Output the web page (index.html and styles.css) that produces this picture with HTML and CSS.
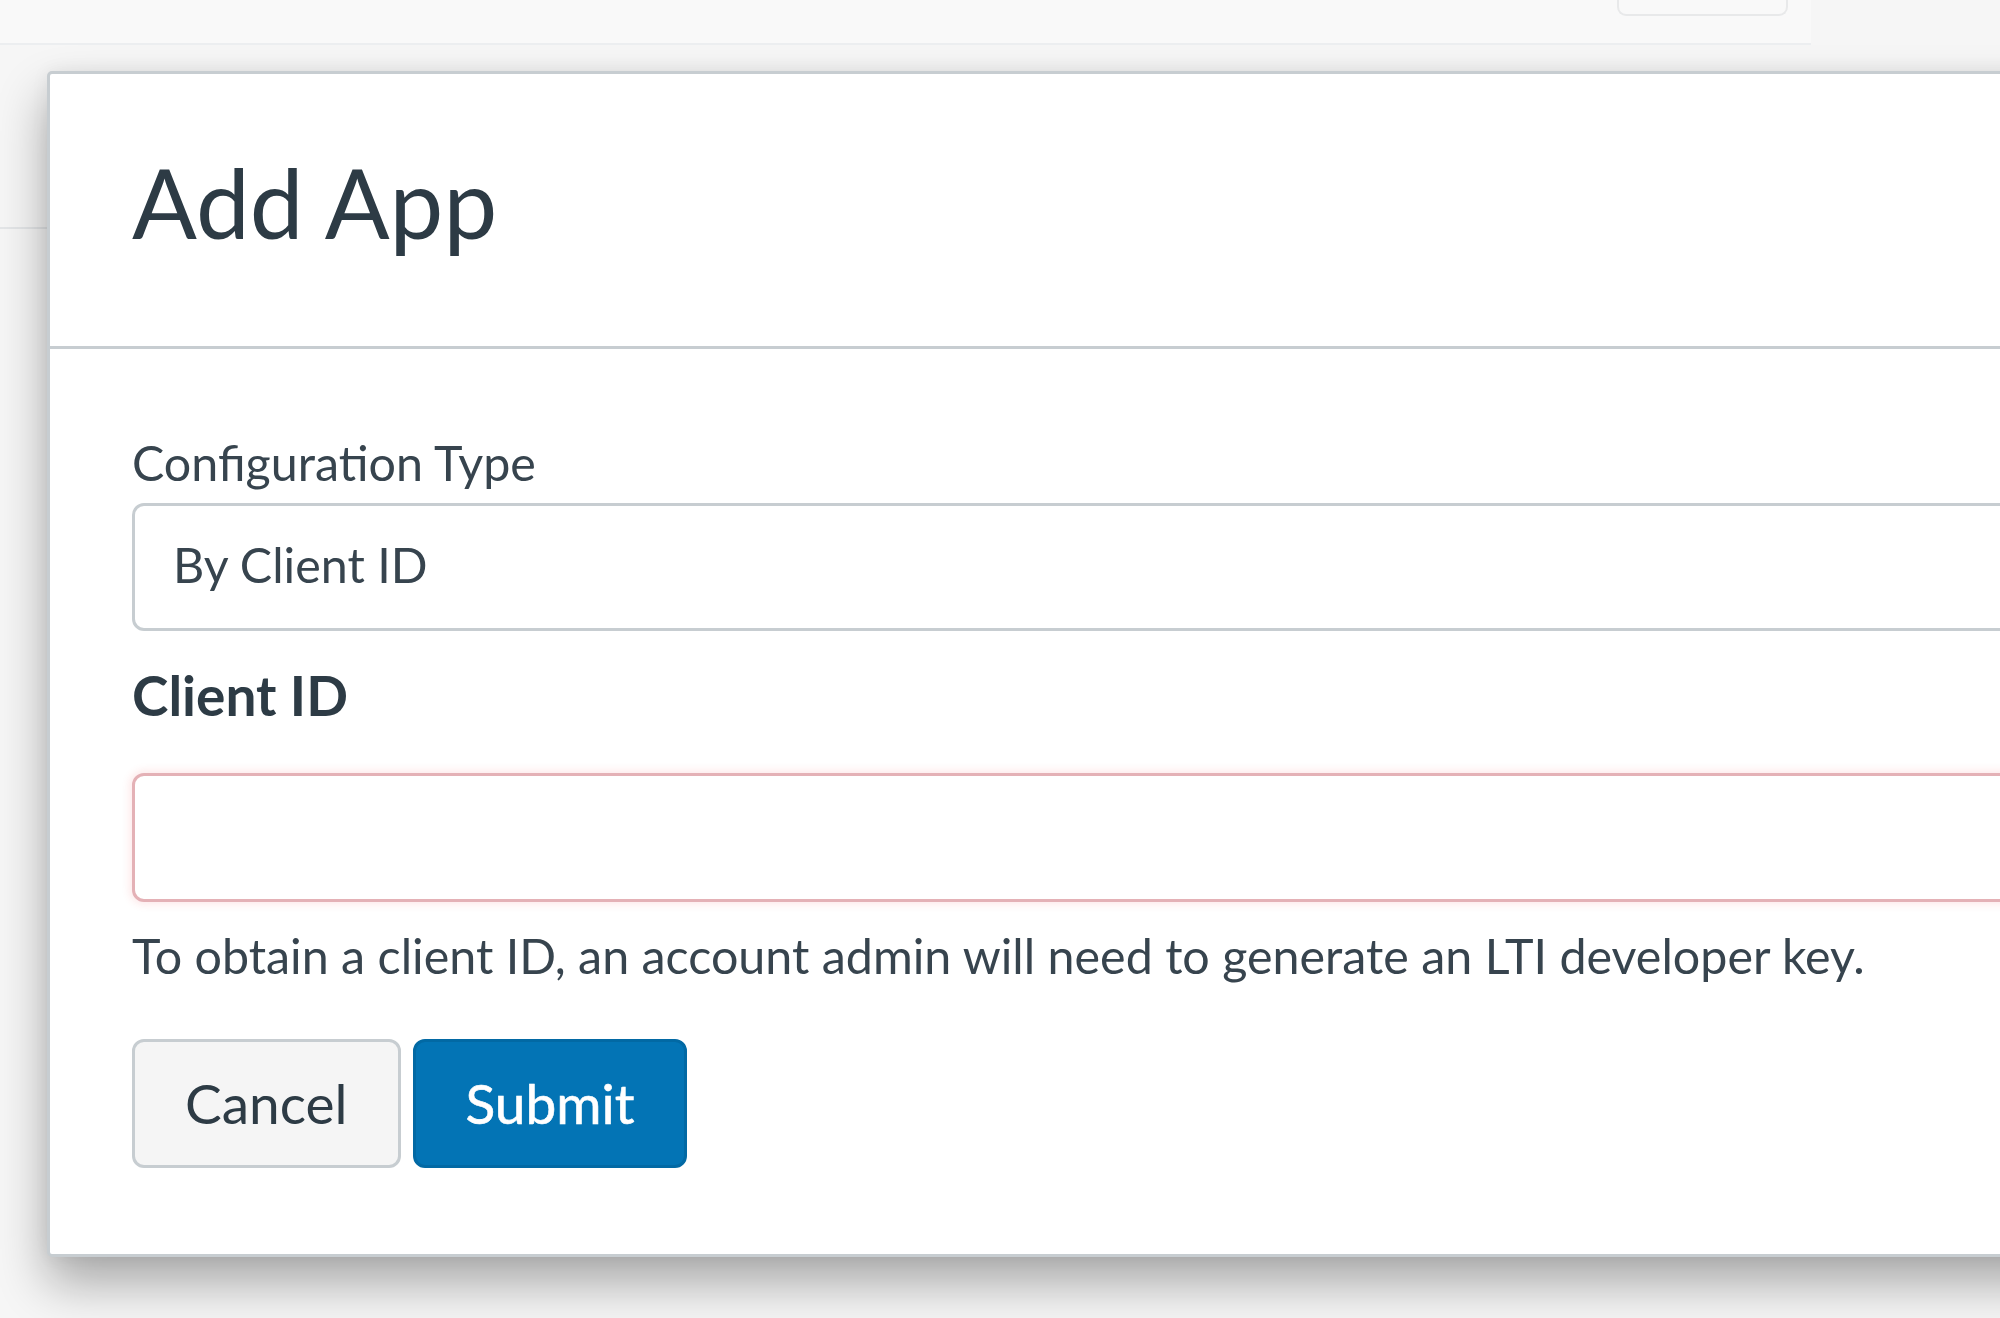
FILE: index.html
```html
<!DOCTYPE html>
<html lang="en">
<head>
<meta charset="utf-8">
<title>Add App</title>
<link rel="stylesheet" href="styles.css">
</head>
<body>
  <div class="backdrop">
    <div class="topbar">
      <span class="topbar-btn"></span>
    </div>
    <div class="left-rule"></div>
  </div>

  <div class="modal" role="dialog" aria-label="Add App">
    <header class="modal-header">
      <h2 class="modal-title">Add App</h2>
    </header>
    <div class="modal-body">
      <label class="field-label">Configuration Type</label>
      <div class="select">By Client ID</div>
      <label class="client-label">Client ID</label>
      <div class="text-input invalid"></div>
      <p class="hint">To obtain a client ID, an account admin will need to generate an LTI developer key.</p>
      <div class="actions">
        <button class="btn btn-default" type="button">Cancel</button>
        <button class="btn btn-primary" type="button">Submit</button>
      </div>
    </div>
  </div>
</body>
</html>
```

FILE: styles.css
```css
html, body {
  margin: 0;
  padding: 0;
}

body {
  width: 2000px;
  height: 1318px;
  overflow: hidden;
  background: #f6f6f6;
  font-family: Lato, "Open Sans", "Liberation Sans", sans-serif;
  color: #2d3b45;
  position: relative;
}

.backdrop {
  display: flex;
  flex-direction: column;
}

.topbar {
  width: 1811px;
  height: 43px;
  background: #f9f9f9;
  border-bottom: 2px solid #eceef0;
  display: flex;
  justify-content: flex-end;
}

.topbar-btn {
  width: 167px;
  height: 14px;
  margin-right: 23px;
  border: 2px solid #e8e9ea;
  border-top: none;
  border-radius: 0 0 9px 9px;
  background: #f9f9f9;
}

.left-rule {
  margin-top: 182px;
  width: 47px;
  height: 2px;
  background: #e4e6e8;
}

.modal {
  position: absolute;
  left: 47px;
  top: 71px;
  width: 2100px;
  background: #ffffff;
  border: 3px solid #c7cdd1;
  border-radius: 5px;
  box-shadow: 0 26px 50px rgba(0, 0, 0, 0.32), 0 0 18px rgba(0, 0, 0, 0.06);
}

.modal-header {
  padding: 70px 82px 87px;
  border-bottom: 3px solid #c7cdd1;
}

.modal-title {
  margin: 0;
  font-size: 96px;
  font-weight: 400;
  line-height: 115px;
  color: #2d3b45;
}

.modal-body {
  padding: 85px 82px 86px;
  display: flex;
  flex-direction: column;
  align-items: stretch;
}

.field-label {
  display: block;
  font-size: 48.4px;
  line-height: 56px;
  color: #37444e;
}

.select {
  margin-top: 13px;
  height: 128px;
  box-sizing: border-box;
  border: 3px solid #c7cdd1;
  border-radius: 12px;
  padding: 0 38px 6px;
  font-size: 48.4px;
  line-height: 116px;
  color: #37444e;
}

.client-label {
  display: block;
  margin-top: 31px;
  font-size: 55px;
  font-weight: 700;
  line-height: 66px;
  color: #2d3b45;
}

.text-input {
  margin-top: 45px;
  height: 129px;
  box-sizing: border-box;
  border: 3px solid #c7cdd1;
  border-radius: 12px;
  background: #fff;
}

.text-input.invalid {
  border-color: #e4b1b6;
  box-shadow: 0 0 10px 2px rgba(238, 6, 18, 0.10);
}

.hint {
  margin: 25px 0 0;
  font-size: 48.4px;
  line-height: 56px;
  color: #37444e;
}

.actions {
  margin-top: 56px;
  display: flex;
  gap: 12px;
}

.btn {
  height: 129px;
  box-sizing: border-box;
  padding: 0 50px;
  border: 3px solid;
  border-radius: 12px;
  font-family: Lato, "Open Sans", "Liberation Sans", sans-serif;
  font-size: 55px;
  font-weight: 400;
  line-height: 1;
  display: flex;
  align-items: center;
  justify-content: center;
  cursor: pointer;
}

.btn-default {
  background: #f5f5f5;
  border-color: #c7cdd1;
  color: #2d3b45;
}

.btn-primary {
  background: #0374b5;
  border-color: #0269a4;
  color: #ffffff;
  -webkit-text-stroke: 0.6px #ffffff;
}
```
